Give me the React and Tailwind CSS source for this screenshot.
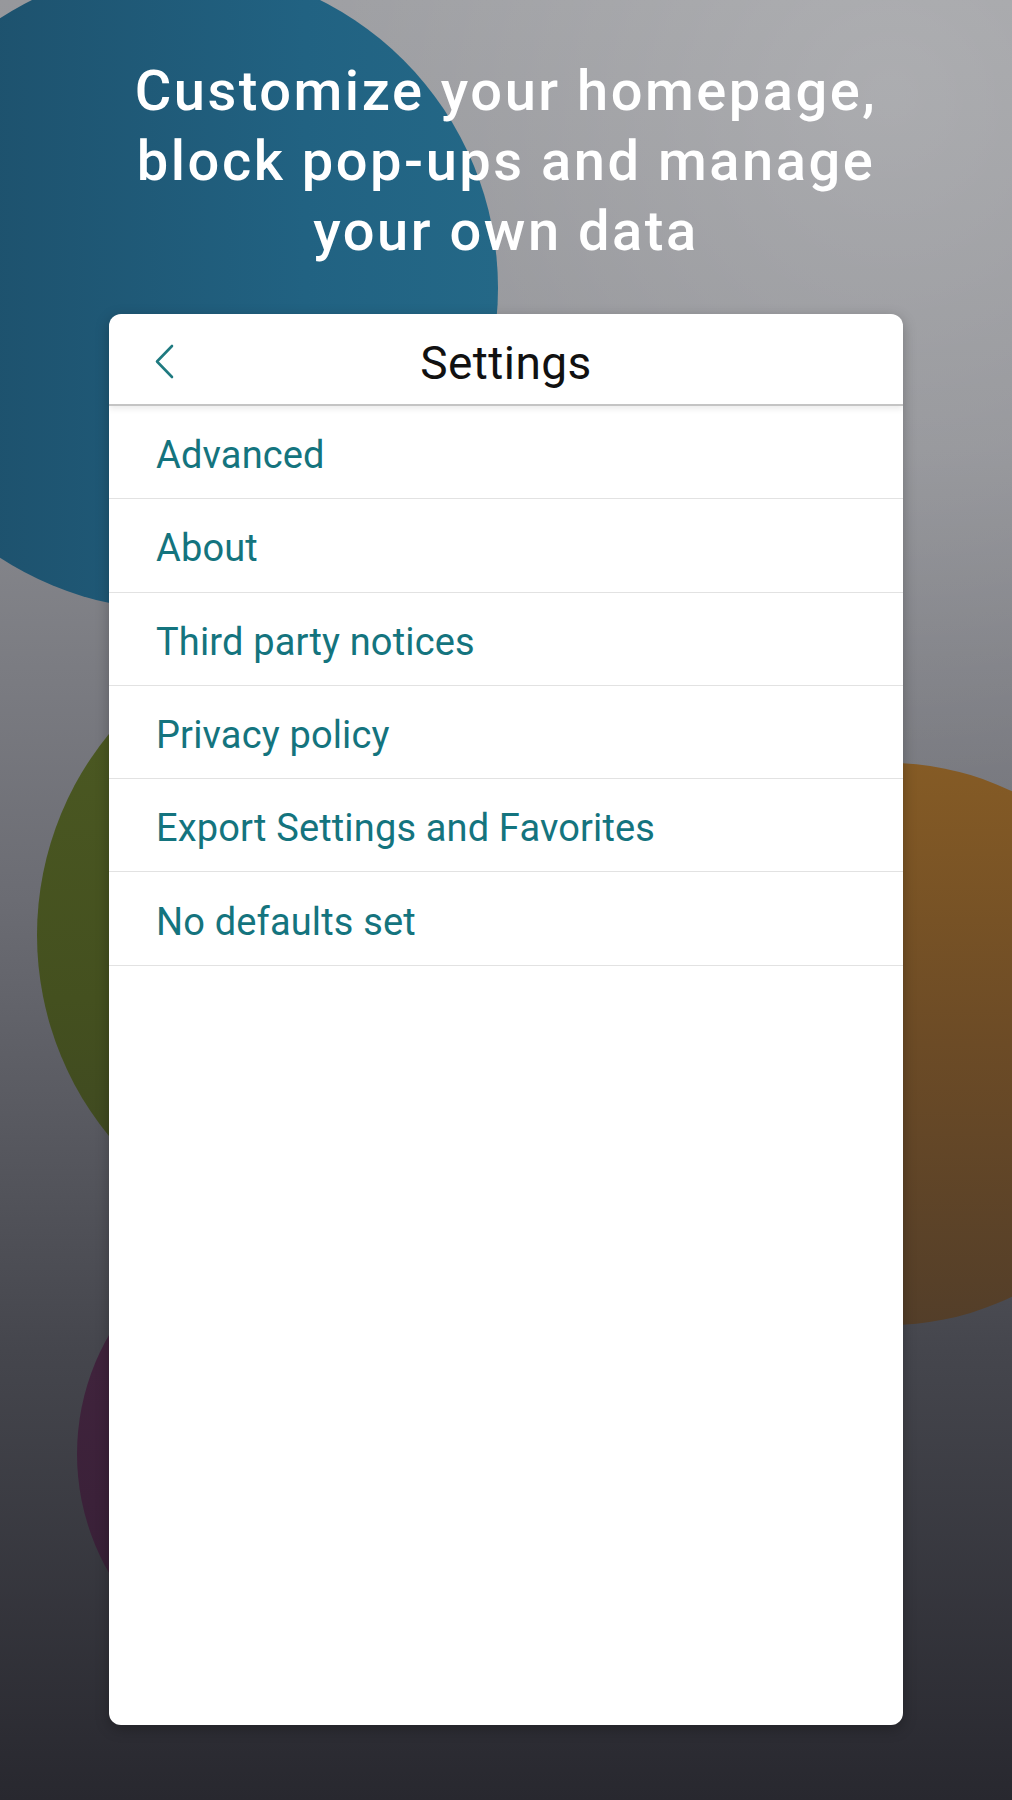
import React from "react";

const items = [
  "Advanced",
  "About",
  "Third party notices",
  "Privacy policy",
  "Export Settings and Favorites",
  "No defaults set",
];

function Backdrop() {
  return (
    <div className="absolute inset-0 overflow-hidden bg-[linear-gradient(180deg,#97989c_0%,#8a8b90_25%,#6b6c73_50%,#45464d_75%,#28282f_100%)]">
      <div className="absolute inset-0 bg-[radial-gradient(circle_at_88%_5%,rgba(255,255,255,0.22),rgba(255,255,255,0)_45%)]" />
      {/* blue */}
      <div className="absolute left-[-146px] top-[-34px] w-[644px] h-[644px] rounded-full bg-[linear-gradient(90deg,#1c4b65_0%,#216282_70%,#246887_100%)]" />
      {/* olive */}
      <div className="absolute left-[37px] top-[618px] w-[634px] h-[634px] rounded-full bg-[linear-gradient(180deg,#4d5b23_0%,#44501f_60%,#3c4522_100%)]" />
      {/* purple */}
      <div className="absolute left-[77px] top-[1217px] w-[474px] h-[474px] rounded-full bg-[linear-gradient(180deg,#44253f_0%,#3b2139_60%,#331f33_100%)]" />
      {/* orange */}
      <div className="absolute left-[608px] top-[763px] w-[562px] h-[562px] rounded-full bg-[linear-gradient(180deg,#855b25_0%,#6c4b26_50%,#533e29_100%)]" />
    </div>
  );
}

export default function App() {
  return (
    <div className="relative w-[1012px] h-[1800px] overflow-hidden font-['Roboto','Liberation_Sans',sans-serif]">
      <Backdrop />
      <div className="relative flex flex-col items-center">
        <h1 className="mt-[56px] text-center text-white font-medium text-[56px] leading-[70px] tracking-[0.045em]">
          Customize your homepage,
          <br />
          block pop-ups and manage
          <br />
          your own data
        </h1>

        <div className="mt-[48px] w-[794px] h-[1411px] bg-white rounded-[12px] overflow-hidden shadow-[0_4px_14px_rgba(0,0,0,0.25)] flex flex-col">
          <div className="relative h-[92px] shrink-0 flex items-center justify-center pt-[7px] border-b-2 border-[#c4c4c4] shadow-[0_3px_6px_rgba(0,0,0,0.08)]">
            <button className="absolute left-[44px] top-[30px] w-[24px] h-[36px] flex items-center justify-center">
              <svg width="20" height="36" viewBox="0 0 20 36" fill="none">
                <path
                  d="M17 2 L2 17.5 L17 33"
                  stroke="#1f7a80"
                  strokeWidth="2.6"
                  strokeLinecap="round"
                  strokeLinejoin="round"
                />
              </svg>
            </button>
            <span className="text-[46px] text-[#111] leading-none tracking-[0.01em]">Settings</span>
          </div>

          <ul className="flex flex-col">
            {items.map((label) => (
              <li
                key={label}
                className="h-[93.3px] flex items-center pl-[47px] pt-[7px] border-b border-[#e2e2e2] text-[38px] text-[#14747e] tracking-[0.004em]"
              >
                {label}
              </li>
            ))}
          </ul>
        </div>
      </div>
    </div>
  );
}
